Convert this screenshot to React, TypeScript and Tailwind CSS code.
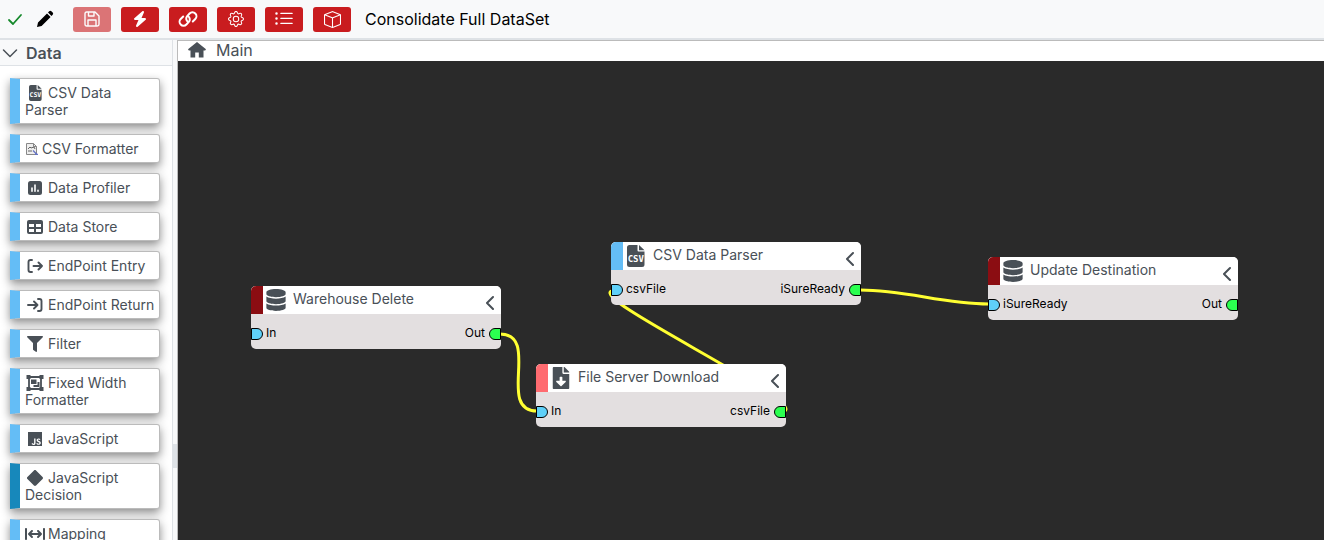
import type { ReactNode } from "react";
import { FaArrowsLeftRightToLine, FaBolt } from "react-icons/fa6";
import { FaDatabase, FaFileDownload, FaFilter } from "react-icons/fa";
import { BsBox, BsDiamondFill, BsGear, BsListUl } from "react-icons/bs";
import { IoLogoJavascript } from "react-icons/io5";

function CheckIcon() {
  return (
    <svg viewBox="0 0 16 16" className="size-4" fill="none" stroke="#15892b" strokeWidth="1.8" strokeLinecap="round" strokeLinejoin="round">
      <path d="M2 9l4 4L14 4" />
    </svg>
  );
}

function PencilIcon() {
  return (
    <svg viewBox="0 0 18 18" className="size-[18px]" fill="#000">
      <path d="M1 17l1-4.6L11 3.4 14.6 7 5.6 16zM12 2.5l1.2-1.2q1.1-1 2.2 0l1.3 1.3q1 1.1 0 2.2L15.5 6z" />
    </svg>
  );
}

function SaveIcon() {
  return (
    <svg viewBox="0 0 16 16" className="size-4" fill="none" stroke="currentColor" strokeWidth="1.4" strokeLinejoin="round">
      <path d="M2.700 1H11l4 4v8.300q0 1.700-1.700 1.700H2.700Q1 15 1 13.300V2.700Q1 1 2.700 1z" />
      <path d="M4.500 1v4H10V1M4 15V9h8v6" />
    </svg>
  );
}

function LinkIcon() {
  return (
    <svg viewBox="0 0 20 16" className="h-4 w-5" fill="none" stroke="currentColor" strokeWidth="2" strokeLinecap="round">
      <path d="M9.800 10.800a3.900 3.900 0 0 1-.8-5.500L11.600 2.500a3.900 3.900 0 0 1 5.700 0 3.900 3.900 0 0 1 0 5.500L14.800 10.500" />
      <path d="M10.200 5.200a3.900 3.900 0 0 1 .8 5.500L8.400 13.500a3.900 3.900 0 0 1-5.700 0 3.900 3.900 0 0 1 0-5.500L5.200 5.500" />
    </svg>
  );
}

function HomeIcon() {
  return (
    <svg viewBox="0 0 18 16" className="h-4 w-[18px]" fill="#495057">
      <path d="M9 0l9 7.300-.8 1.200H15.500V15.500H10.800V10.500H7.200V15.500H2.500V8.500H.8L0 7.300z" />
    </svg>
  );
}

function CsvFileIcon({ large = false }: { large?: boolean }) {
  return (
    <svg viewBox="0 0 18 22" aria-hidden="true" className={large ? "h-[22px] w-[18px]" : "inline-block h-4 w-[13px]"} fill="currentColor">
      <path d="M2.500 0H10.500V5.500q0 1 1 1H17.500V19.500q0 2.500-2.500 2.500H2.500Q0 22 0 19.500V2.500Q0 0 2.500 0zM12 0l5.500 5.200H12z" />
      <text x="8.800" y="16.500" textAnchor="middle" fill="#fff" className="font-['DejaVu_Sans_Mono',monospace] text-[9px] font-bold">
        CSV
      </text>
    </svg>
  );
}

function ChartIcon() {
  return (
    <svg viewBox="0 0 14 14" className="inline-block size-[14px]">
      <rect width="14" height="14" rx="2.500" fill="currentColor" />
      <path d="M4 7v3.300M7 4v6.300M10 9.300v1" stroke="#fff" strokeWidth="1.600" strokeLinecap="round" />
    </svg>
  );
}

function TableIcon() {
  return (
    <svg viewBox="0 0 16 14" className="inline-block h-[14px] w-4">
      <rect width="16" height="14" rx="2" fill="currentColor" />
      <path d="M2 4h5v3H2zM9 4h5v3H9zM2 9h5v3H2zM9 9h5v3H9z" fill="#fff" />
    </svg>
  );
}

function GroupIcon() {
  return (
    <svg viewBox="0 0 18 16" className="inline-block h-4 w-[18px]" fill="currentColor">
      <path d="M3 2h12v12H3z" fill="none" stroke="currentColor" strokeWidth="1.800" />
      <path d="M.5 0h4v4h-4zM13.500 0h4v4h-4zM.5 12h4v4h-4zM13.500 12h4v4h-4z" />
      <path d="M5 4.500h5.500v4.500H5zM11.500 7H13.500v5H7.500V10h4z" />
    </svg>
  );
}

function EntryIcon() {
  return (
    <svg viewBox="0 0 16 16" className="inline-block size-4" fill="none" stroke="currentColor" strokeWidth="1.9" strokeLinecap="round" strokeLinejoin="round">
      <path d="M5 2H3.500Q1.500 2 1.500 4v8q0 2 2 2H5M6.500 8H15M11.500 4.500L15 8l-3.500 3.500" />
    </svg>
  );
}

function ReturnIcon() {
  return (
    <svg viewBox="0 0 16 16" className="inline-block size-4" fill="none" stroke="currentColor" strokeWidth="1.9" strokeLinecap="round" strokeLinejoin="round">
      <path d="M11 2h1.500q2 0 2 2v8q0 2-2 2H11M1 8h9.500M7 4.500L10.500 8 7 11.500" />
    </svg>
  );
}

function FormatterIcon() {
  return (
    <svg viewBox="0 0 12 12" className="inline-block size-3" fill="none">
      <path d="M.5.500h7l3 3v8H.500z" fill="#eee" stroke="#888" />
      <path d="M7.500.500v3h3" stroke="#888" />
      <path d="M2 6l2-2 1 1 3-1 1 2M2 8h4" stroke="#555" strokeWidth=".9" />
      <path d="M7 7.500l4 4M9 11.300h3" stroke="#6674c4" strokeWidth="1.300" />
    </svg>
  );
}

function Chevron({ down = false }: { down?: boolean }) {
  return (
    <svg viewBox="0 0 16 16" className="size-4" fill="none" stroke="#495057" strokeWidth={down ? 1.5 : 2} strokeLinecap="round" strokeLinejoin="round">
      <path d={down ? "M1.500 5L8 11.500 14.500 5" : "M11 3L5 9 11 15"} />
    </svg>
  );
}

type Tool = { label: string; icon: ReactNode; small?: boolean; dark?: boolean };

const tools: Tool[] = [
  { label: "CSV Data Parser", icon: <CsvFileIcon /> },
  { label: "CSV Formatter", icon: <FormatterIcon />, small: true },
  { label: "Data Profiler", icon: <ChartIcon /> },
  { label: "Data Store", icon: <TableIcon /> },
  { label: "EndPoint Entry", icon: <EntryIcon /> },
  { label: "EndPoint Return", icon: <ReturnIcon /> },
  { label: "Filter", icon: <FaFilter className="inline-block size-4" /> },
  { label: "Fixed Width Formatter", icon: <GroupIcon /> },
  { label: "JavaScript", icon: <IoLogoJavascript className="inline-block size-4" /> },
  { label: "JavaScript Decision", icon: <BsDiamondFill className="inline-block size-4" />, dark: true },
  { label: "Mapping", icon: <FaArrowsLeftRightToLine className="inline-block size-5" /> },
];

const actions = [
  { label: "Save", icon: <SaveIcon />, disabled: true },
  { label: "Run", icon: <FaBolt className="size-4" /> },
  { label: "Link", icon: <LinkIcon /> },
  { label: "Settings", icon: <BsGear className="size-4" /> },
  { label: "List", icon: <BsListUl className="size-5" /> },
  { label: "Package", icon: <BsBox className="size-[17px]" /> },
];

type FlowNode = { title: string; place: string; accent: string; icon: ReactNode; input: string; output: string };

const nodes: FlowNode[] = [
  { title: "Warehouse Delete", place: "left-[73px] top-[225px]", accent: "bg-[#8b0d12]", icon: <FaDatabase className="size-[22px]" />, input: "In", output: "Out" },
  { title: "CSV Data Parser", place: "left-[433px] top-[181px]", accent: "bg-[#64bdf6]", icon: <CsvFileIcon large />, input: "csvFile", output: "iSureReady" },
  { title: "File Server Download", place: "left-[358px] top-[303px]", accent: "bg-[#ff6b70]", icon: <FaFileDownload className="size-[22px]" />, input: "In", output: "csvFile" },
  { title: "Update Destination", place: "left-[810px] top-[196px]", accent: "bg-[#8b0d12]", icon: <FaDatabase className="size-[22px]" />, input: "iSureReady", output: "Out" },
];

function NodeCard({ node }: { node: FlowNode }) {
  return (
    <article className={`absolute w-[250px] overflow-hidden rounded-[5px] bg-[#e3dfe0] ${node.place}`}>
      <header className="flex h-7 bg-white text-[#495057]">
        <span className={`w-3 shrink-0 ${node.accent}`} />
        <span className="flex w-[30px] shrink-0 justify-center pr-1 pt-[3px]">{node.icon}</span>
        <h2 className="grow text-sm leading-[26px]">{node.title}</h2>
        <button type="button" aria-label="Collapse" className="flex items-center pr-[3px] pt-1">
          <Chevron />
        </button>
      </header>
      <div className="flex h-[35px] items-center justify-between pt-1 text-xs text-black">
        <span className="flex items-center gap-[3px]">
          <span className="h-3 w-3 rounded-r-full border border-black bg-[#5fd0f8]" />
          <span className="pb-[2px]">{node.input}</span>
        </span>
        <span className="flex items-center gap-1">
          <span className="pb-[2px]">{node.output}</span>
          <span className="h-3 w-3 rounded-l-full border border-black bg-[#2bff50]" />
        </span>
      </div>
    </article>
  );
}

export default function App() {
  return (
    <div className="flex h-screen flex-col overflow-hidden bg-white font-['Inter',sans-serif] text-[#495057]">
      <header className="flex h-10 shrink-0 items-center border-b-2 border-[#dee2e6] bg-[#f8f9fa] pl-[7px]">
        <CheckIcon />
        <button type="button" aria-label="Edit name" className="ml-[13px] mr-[19px]">
          <PencilIcon />
        </button>
        <div className="flex gap-[10px]">
          {actions.map((action) => (
            <button
              key={action.label}
              type="button"
              aria-label={action.label}
              disabled={action.disabled}
              className="flex h-[25px] w-[38px] items-center justify-center rounded-[3px] bg-[#c91c1f] text-white disabled:opacity-60"
            >
              {action.icon}
            </button>
          ))}
        </div>
        <h1 className="ml-[14px] text-base text-black">Consolidate Full DataSet</h1>
      </header>

      <div className="flex min-h-0 grow">
        <aside className="w-[173px] shrink-0 overflow-hidden border-r border-[#dee2e6]">
          <button type="button" className="flex h-[26px] w-full items-center gap-2 border-b border-[#dee2e6] bg-[#f8f9fa] pl-[2px] text-base font-semibold">
            <Chevron down />
            Data
          </button>
          <ul className="flex flex-col gap-[10px] px-[10px] pt-3">
            {tools.map((tool) => (
              <li
                key={tool.label}
                className={`w-[150px] rounded-r-[3px] border-y border-l-10 border-r border-y-[#bbb] border-r-[#bbb] bg-white py-[5px] pl-[5px] pr-1 text-sm leading-[17px] shadow-[0_4px_10px_rgba(0,0,0,0.45)] ${tool.dark ? "border-l-[#1788bb]" : "border-l-[#64bdf6]"}`}
              >
                <span className={`inline-flex h-[17px] items-center justify-center align-top ${tool.small ? "mr-1 w-[13px]" : "mr-[3px] w-5"}`}>{tool.icon}</span>
                {tool.label}
              </li>
            ))}
          </ul>
        </aside>
        <div className="flex w-[5px] shrink-0 flex-col border-r border-[#bbb] bg-[#f8f9fa]">
          <div className="mt-auto mb-[72px] h-6 bg-[#dee2e6]" />
        </div>
        <main className="flex min-w-0 grow flex-col">
          <nav className="flex h-[21px] shrink-0 items-center gap-[10px] border-t border-[#bbb] bg-white pb-[2px] pl-[10px] text-base">
            <HomeIcon />
            <a href="#main">Main</a>
          </nav>
          <section className="relative min-h-0 grow overflow-hidden bg-[#2a2a2a]">
            <svg className="absolute left-0 top-0 h-full w-full" fill="none" stroke="#ffff32" strokeWidth="3">
              <path d="M322 273C363 273 318 350 359 350" />
              <path d="M607 350C624 338 409 237 434 230" />
              <path d="M682 229C729 229 764 243 811 243" />
            </svg>
            {nodes.map((node) => (
              <NodeCard key={node.title} node={node} />
            ))}
          </section>
        </main>
      </div>
    </div>
  );
}
